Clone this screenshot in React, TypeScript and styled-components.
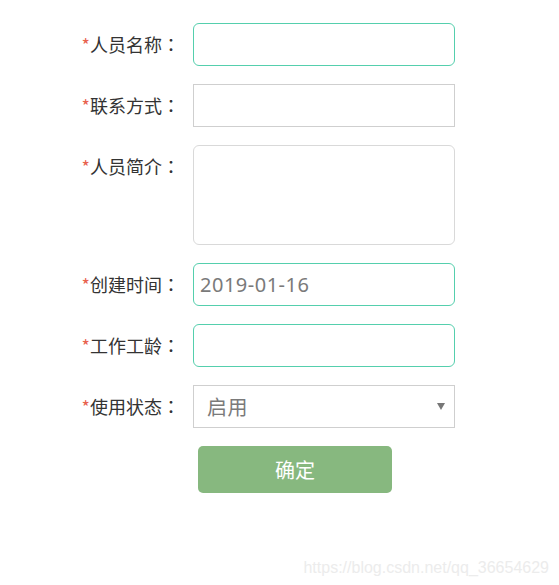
import React from "react";
import styled, { createGlobalStyle } from "styled-components";

const GlobalStyle = createGlobalStyle`
  html, body {
    margin: 0;
    padding: 0;
    background: #fff;
  }
  body {
    font-family: "Noto Sans CJK SC", "Noto Sans", sans-serif;
    color: #333;
  }
`

const Page = styled.div`
  position: relative;
  width: 559px;
  height: 585px;
  overflow: hidden;
`

const Form = styled.form`
  display: flex;
  flex-direction: column;
  gap: 18px;
  padding-top: 23px;
`

const Row = styled.div`
  display: flex;
  align-items: flex-start;
  gap: 13px;
`

const Label = styled.label`
  width: 180px;
  flex-shrink: 0;
  text-align: right;
  font-size: 18px;
  line-height: 43px;
  color: #333;
  white-space: nowrap;
`

const Star = styled.span`
  color: #e8604c;
`

// the JP face centres the full-width colon, like the reference
const Colon = styled.span`
  font-family: "Noto Sans CJK JP", sans-serif;
`

const Field = styled.div<{ $focus?: boolean; $round?: boolean; $height?: number }>`
  position: relative;
  box-sizing: border-box;
  width: 262px;
  height: ${p => p.$height ?? 43}px;
  border: 1px solid ${p => (p.$focus ? "#55cfad" : p.$round ? "#d9d9d9" : "#cfcfcf")};
  border-radius: ${p => (p.$round || p.$focus ? 6 : 0)}px;
  display: flex;
  align-items: center;
  font-family: "Noto Sans", "Noto Sans CJK SC", sans-serif;
  font-size: 20px;
  color: #7a7a7a;
  background: #fff;
`

const Value = styled.span<{ $indent?: number }>`
  padding-left: ${p => p.$indent ?? 6}px;
  letter-spacing: 0.5px;
`

const Arrow = styled.span`
  position: absolute;
  right: 9px;
  top: 17px;
  width: 0;
  height: 0;
  border-left: 4px solid transparent;
  border-right: 4px solid transparent;
  border-top: 7px solid #777;
`

const Submit = styled.button`
  margin-left: 198px;
  width: 194px;
  height: 47px;
  border: none;
  border-radius: 5px;
  background: #87b87f;
  color: #fff;
  font-family: "Noto Sans CJK SC", sans-serif;
  font-size: 20px;
  cursor: pointer;
`

const Watermark = styled.div`
  position: absolute;
  right: 10px;
  bottom: 8px;
  font-family: "Liberation Sans", Arial, sans-serif;
  font-size: 16px;
  color: #ececec;
`

const fields = [
  { label: "人员名称", focus: true },
  { label: "联系方式" },
  { label: "人员简介", round: true, height: 100 },
  { label: "创建时间", focus: true, value: "2019-01-16" },
  { label: "工作工龄", focus: true },
  { label: "使用状态", value: "启用", select: true },
]

export default function App() {
  return (
    <Page>
      <GlobalStyle />
      <Form onSubmit={e => e.preventDefault()}>
        {fields.map(f => (
          <Row key={f.label}>
            <Label>
              <Star>*</Star>
              {f.label}
              <Colon>：</Colon>
            </Label>
            <Field $focus={f.focus} $round={f.round} $height={f.height}>
              {f.value && <Value $indent={f.select ? 13 : 6}>{f.value}</Value>}
              {f.select && <Arrow />}
            </Field>
          </Row>
        ))}
        <Submit type="submit">确定</Submit>
      </Form>
      <Watermark>https://blog.csdn.net/qq_36654629</Watermark>
    </Page>
  )
}
